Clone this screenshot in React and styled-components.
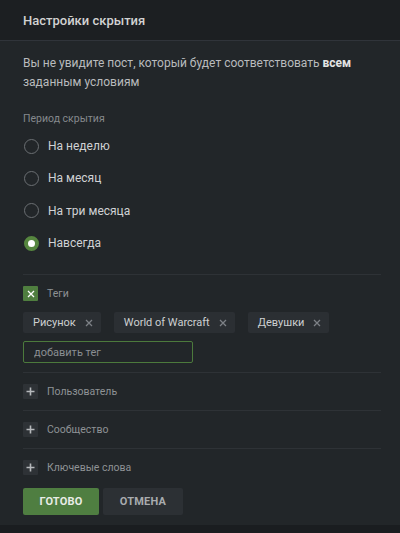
import React, { useState } from "react";
import styled, { createGlobalStyle } from "styled-components";

const Global = createGlobalStyle`
  html, body {
    margin: 0;
    padding: 0;
    background: #1a1d20;
    font-family: Roboto, "Noto Sans", sans-serif;
  }
  * { box-sizing: border-box; }
`;

const Modal = styled.div`
  width: 400px;
  height: 525px;
  background: #222629;
  display: flex;
  flex-direction: column;
`;

const Header = styled.div`
  height: 41px;
  background: #1c1f22;
  border-bottom: 1px solid #30343a;
  display: flex;
  align-items: center;
  padding: 0 23px;
  color: #d2d2d2;
  font-size: 13px;
  font-weight: 500;
`;

const Body = styled.div`
  padding: 13px 19px 0 23px;
  display: flex;
  flex-direction: column;
`;

const Intro = styled.p`
  margin: 0;
  font-size: 12px;
  line-height: 19px;
  color: #b9bbbd;
  b { color: #e4e4e4; font-weight: 700; }
`;

const Caption = styled.div`
  margin-top: 20px;
  font-size: 10.5px;
  color: #85898d;
`;

const RadioList = styled.div`
  display: flex;
  flex-direction: column;
  margin-top: 5px;
`;

const RadioRow = styled.label`
  height: 32.3px;
  display: flex;
  align-items: center;
  gap: 9px;
  font-size: 12px;
  color: #d0d2d4;
  cursor: pointer;
`;

const RadioCircle = styled.span`
  width: 15px;
  height: 15px;
  border-radius: 50%;
  border: ${p => (p.$on ? "4px solid #56863f" : "1.5px solid #6b6f73")};
  background: ${p => (p.$on ? "#fff" : "transparent")};
  margin-left: 1px;
`;

const Divider = styled.div`
  height: 1px;
  background: #2e3236;
  margin: ${p => p.$m || "0"};
`;

const Section = styled.div`
  display: flex;
  align-items: center;
  gap: 9px;
  height: 37px;
  font-size: 10.5px;
  color: #8e9295;
`;

const Box = styled.span`
  width: 15px;
  height: 15px;
  border-radius: 1px;
  background: ${p => (p.$on ? "#4f7e3f" : "#2e3236")};
  display: flex;
  align-items: center;
  justify-content: center;
`;

const Tags = styled.div`
  display: flex;
  gap: 13px;
`;

const Tag = styled.span`
  height: 21px;
  padding: 0 8px 0 10px;
  display: flex;
  align-items: center;
  gap: 9px;
  background: #2b2f33;
  border-radius: 2px;
  color: #cdcfd1;
  font-size: 11px;
`;

const Input = styled.input`
  margin-top: 8px;
  width: 170px;
  height: 22px;
  background: transparent;
  border: 1px solid #4c7a3c;
  border-radius: 2px;
  padding: 0 10px;
  color: #ccc;
  font-family: inherit;
  font-size: 11px;
  outline: none;
  &::placeholder { color: #8a8e92; }
`;

const Buttons = styled.div`
  display: flex;
  gap: 4px;
  margin-top: 2px;
`;

const Button = styled.button`
  height: 27px;
  width: ${p => p.$w}px;
  border: none;
  border-radius: 2px;
  background: ${p => (p.$primary ? "#4f7e41" : "#2c3034")};
  color: ${p => (p.$primary ? "#e8ece6" : "#a8abae")};
  font-family: inherit;
  font-weight: 700;
  font-size: 11px;
  letter-spacing: 0.2px;
`;

const Cross = ({ c = "#7d8186", s = 8 }) => (
  <svg width={s} height={s} viewBox="0 0 8 8">
    <path d="M1 1L7 7M7 1L1 7" stroke={c} strokeWidth="1.3" />
  </svg>
);

const Plus = () => (
  <svg width="9" height="9" viewBox="0 0 9 9">
    <path d="M4.5 0.5V8.5M0.5 4.5H8.5" stroke="#b5b8bb" strokeWidth="1.6" />
  </svg>
);

const periods = ["На неделю", "На месяц", "На три месяца", "Навсегда"];
const tags = ["Рисунок", "World of Warcraft", "Девушки"];

export default function App() {
  const [period, setPeriod] = useState(3);
  return (
    <>
      <Global />
      <Modal>
        <Header>Настройки скрытия</Header>
        <Body>
          <Intro>
            Вы не увидите пост, который будет соответствовать <b>всем</b> заданным условиям
          </Intro>
          <Caption>Период скрытия</Caption>
          <RadioList>
            {periods.map((p, i) => (
              <RadioRow key={p} onClick={() => setPeriod(i)}>
                <RadioCircle $on={period === i} />
                {p}
              </RadioRow>
            ))}
          </RadioList>
          <Divider $m="15px 0 0" />
          <Section>
            <Box $on>
              <Cross c="#fff" s={8} />
            </Box>
            Теги
          </Section>
          <Tags>
            {tags.map(t => (
              <Tag key={t}>
                {t}
                <Cross />
              </Tag>
            ))}
          </Tags>
          <Input placeholder="добавить тег" />
          <Divider $m="9px 0 0" />
          <Section>
            <Box><Plus /></Box>
            Пользователь
          </Section>
          <Divider />
          <Section>
            <Box><Plus /></Box>
            Сообщество
          </Section>
          <Divider />
          <Section>
            <Box><Plus /></Box>
            Ключевые слова
          </Section>
          <Buttons>
            <Button $primary $w={76}>ГОТОВО</Button>
            <Button $w={80}>ОТМЕНА</Button>
          </Buttons>
        </Body>
      </Modal>
    </>
  );
}
